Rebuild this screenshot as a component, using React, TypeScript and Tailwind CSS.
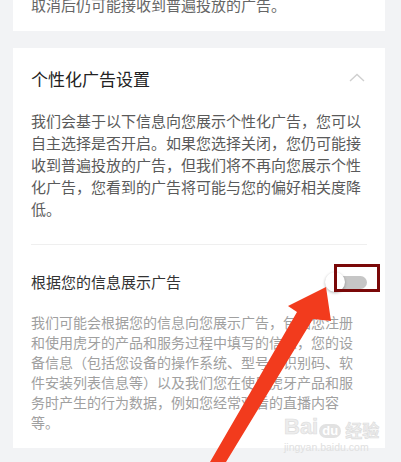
import React from "react";

const font = { fontFamily: '"Noto Sans CJK SC", "Noto Sans", sans-serif' };

export default function App() {
  return (
    <div
      className="relative w-[401px] h-[462px] overflow-hidden bg-[#f2f3f5]"
      style={font}
    >
      {/* previous card (cut off) */}
      <div className="ml-[13px] w-[372px] bg-white -mt-[6px] pb-[15px] px-[18px]">
        <p className="text-[15px] leading-[22px] text-[#666]">取消后仍可能接收到普遍投放的广告。</p>
      </div>

      {/* personalised ad settings */}
      <div className="ml-[13px] w-[372px] bg-white mt-[17px] pt-[19px] pb-[16px] px-[18px]">
        <div className="flex items-center justify-between">
          <h2 className="text-[17px] leading-[24px] text-[#222]">个性化广告设置</h2>
          <svg width="16" height="9" viewBox="0 0 16 9" className="mr-[2px] -mt-[4px]">
            <path d="M1 8 L8 1.5 L15 8" fill="none" stroke="#cfcfcf" strokeWidth="1.4" />
          </svg>
        </div>
        <p className="mt-[19px] text-[15px] leading-[22px] text-[#5a5a5a]">
          我们会基于以下信息向您展示个性化广告，您可以
          <br />
          自主选择是否开启。如果您选择关闭，您仍可能接
          <br />
          收到普遍投放的广告，但我们将不再向您展示个性
          <br />
          化广告，您看到的广告将可能与您的偏好相关度降
          <br />
          低。
        </p>
        <div className="mt-[24px] h-px bg-[#efefef]" />
        <div className="mt-[26px] flex items-center justify-between">
          <span className="text-[15px] leading-[22px] text-[#333]">根据您的信息展示广告</span>
          <div className="relative w-[42px] h-[20px] flex items-center">
            <div className="ml-[12px] w-[30px] h-[13px] rounded-full bg-[#c6c6c6]" />
            <div className="absolute left-0 top-0 w-[20px] h-[20px] rounded-full bg-white shadow-[0_1px_3px_rgba(0,0,0,0.3)]" />
          </div>
        </div>
        <p className="mt-[19px] text-[14px] leading-[20px] text-[#a0a0a0]">
          我们可能会根据您的信息向您展示广告，包括您注册
          <br />
          和使用虎牙的产品和服务过程中填写的信息，您的设
          <br />
          备信息（包括您设备的操作系统、型号、识别码、软
          <br />
          件安装列表信息等）以及我们您在使用虎牙产品和服
          <br />
          务时产生的行为数据，例如您经常观看的直播内容
          <br />
          等。
        </p>
      </div>

      {/* annotation box */}
      <div className="absolute left-[334px] top-[264px] w-[46px] h-[28px] border-[3px] border-[#7a0808]" />

      {/* watermark */}
      <div className="absolute left-[284px] top-[416px] flex flex-col items-start pointer-events-none">
        <div className="flex items-end gap-[1px] leading-none">
          <span className="text-[22px] font-bold text-[#ededed] [-webkit-text-stroke:0.6px_#dcdcdc]" style={{ fontFamily: '"Liberation Sans", sans-serif' }}>Bai</span>
          <span className="relative text-[13px] font-bold text-white bg-[#e2e2e2] rounded-[7px] px-[3px] pb-[1px]" style={{ fontFamily: '"Liberation Sans", sans-serif' }}>du</span>
          <span className="ml-[3px] text-[17px] font-bold text-[#ededed] [-webkit-text-stroke:0.6px_#dcdcdc]">经验</span>
        </div>
        <span className="mt-[4px] text-[10.5px] leading-none text-[#e0e0e0]" style={{ fontFamily: '"Liberation Sans", sans-serif' }}>jingyan.baidu.com</span>
      </div>

      {/* red arrow */}
      <svg className="absolute inset-0 pointer-events-none" width="401" height="462" viewBox="0 0 401 462">
        <polygon
          points="326,287 331,321 313,319 226,462 210,462 297,312 288,306"
          fill="#f23b1d"
        />
      </svg>
    </div>
  );
}
